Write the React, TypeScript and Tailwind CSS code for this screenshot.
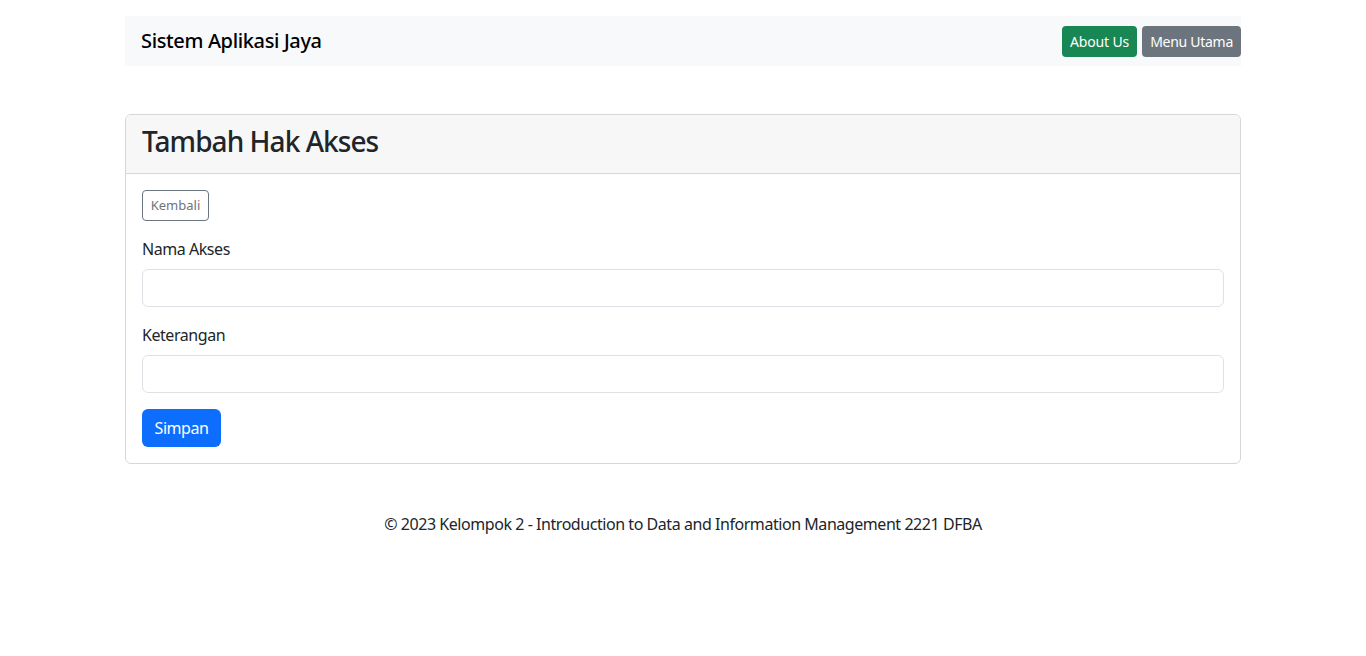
export default function App() {
  return (
    <div
      className="min-h-screen bg-white tracking-[-0.028em] text-[#212529]"
      style={{ fontFamily: '"Noto Sans", "Open Sans", sans-serif' }}
    >
      <div className="mx-auto w-[1116px] pt-4">
        {/* navbar */}
        <nav className="flex h-[50px] items-center justify-between bg-[#f8f9fa] pl-4">
          <span className="text-[20px] font-medium leading-[30px] tracking-[-0.018em] text-black">
            Sistem Aplikasi Jaya
          </span>
          <div className="flex gap-[5px]">
            <button className="h-[31px] rounded-[4px] bg-[#198754] px-2 text-[14px] tracking-[-0.01em] text-white">
              About Us
            </button>
            <button className="h-[31px] rounded-[4px] bg-[#6c757d] px-2 text-[14px] tracking-[-0.02em] text-white">
              Menu Utama
            </button>
          </div>
        </nav>

        {/* card */}
        <div className="mt-12 rounded-[6px] border border-[#d6d6d6]">
          <div className="h-[59px] rounded-t-[5px] border-b border-[#d6d6d6] bg-[#f7f7f7] px-4 pt-[9px]">
            <h3 className="text-[28px] font-medium leading-[34px] tracking-[-0.034em]">
              Tambah Hak Akses
            </h3>
          </div>
          <div className="p-4">
            <button className="mb-4 h-[31px] w-[67px] rounded-[4px] border border-[#6c757d] text-[13px] tracking-normal text-[#6c757d]">
              Kembali
            </button>
            <div className="mb-4">
              <label className="mb-2 block text-[16px] leading-6">Nama Akses</label>
              <input
                type="text"
                className="block h-[38px] w-full rounded-[6px] border border-[#dee2e6] px-3 outline-none"
              />
            </div>
            <div className="mb-4">
              <label className="mb-2 block text-[16px] leading-6">Keterangan</label>
              <input
                type="text"
                className="block h-[38px] w-full rounded-[6px] border border-[#dee2e6] px-3 outline-none"
              />
            </div>
            <button className="h-[38px] w-[79px] rounded-[6px] bg-[#0d6efd] text-[16px] text-white">
              Simpan
            </button>
          </div>
        </div>

        <footer className="mt-12 text-center text-[16px] leading-6">
          © 2023 Kelompok 2 - Introduction to Data and Information Management 2221 DFBA
        </footer>
      </div>
    </div>
  );
}
